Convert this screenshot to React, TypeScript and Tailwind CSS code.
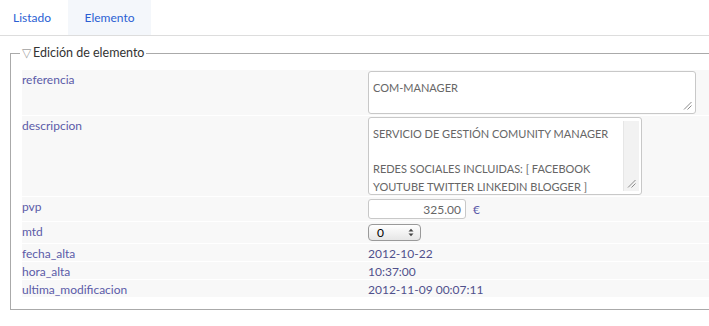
const descripcion = [
  'SERVICIO DE GESTIÓN COMUNITY MANAGER',
  '\u00a0',
  'REDES SOCIALES INCLUIDAS: [ FACEBOOK',
  'YOUTUBE TWITTER LINKEDIN BLOGGER ]',
]

export default function App() {
  return (
    <div className="w-[709px] h-[326px] overflow-hidden bg-white font-['Lato',sans-serif] text-[12px]">
      {/* Pestañas */}
      <div className="flex h-[36px] border-b border-[#dddddd]">
        <div className="flex items-center w-[68px] pl-[13px] text-[#2b5fd3]">Listado</div>
        <div className="flex items-center justify-center w-[83px] bg-[#f4f7fb] text-[#2b5fd3]">Elemento</div>
      </div>

      <fieldset className="ml-[10px] mt-[10px] w-[740px] border border-[#aaaaaa] px-[11px] pt-[10px] pb-[12px]">
        <legend className="-ml-[2px] px-[2px] leading-[14px] text-[#333333] text-[12.5px]">
          <span className="text-[#a0a0a0] text-[12px] mr-[2px]">▽</span>Edición de elemento
        </legend>

        <div className="flex flex-col gap-px">
          <Row label="referencia" pad="py-[1px]">
            <TextBox className="w-[328px] h-[43px]">
              <div>COM-MANAGER</div>
            </TextBox>
          </Row>

          <Row label="descripcion" pad="py-[1px]">
            <TextBox className="w-[274px] h-[78px]" scroll>
              {descripcion.map((l, i) => (
                <div key={i} className="whitespace-nowrap">{l}</div>
              ))}
            </TextBox>
          </Row>

          <Row label="pvp" pad="py-[2px]">
            <div className="flex items-center gap-[7px]">
              <div className="w-[98px] h-[20px] border border-[#c8c8c8] rounded-[3px] bg-white flex items-center justify-end pr-[4px] text-[#666666]">
                325.00
              </div>
              <span className="text-[#5b5ba8]">€</span>
            </div>
          </Row>

          <Row label="mtd" pad="py-[2px]">
            <div className="w-[53px] h-[17px] border border-[#9a9a9a] rounded-[4px] bg-gradient-to-b from-white to-[#e6e6e6] flex items-center justify-between pl-[8px] pr-[6px] text-black">
              <span className="leading-none">0</span>
              <svg width="6" height="9" viewBox="0 0 6 9">
                <path d="M0.5 3.5 L3 0.8 L5.5 3.5 Z" fill="#444" />
                <path d="M0.5 5.5 L3 8.2 L5.5 5.5 Z" fill="#444" />
              </svg>
            </div>
          </Row>

          <Row label="fecha_alta" pad="pt-[3px] pb-[1px]">
            <span className="text-[#50508c]">2012-10-22</span>
          </Row>
          <Row label="hora_alta" pad="pt-[3px] pb-[1px]">
            <span className="text-[#50508c]">10:37:00</span>
          </Row>
          <Row label="ultima_modificacion" pad="pt-[3px] pb-[1px]">
            <span className="text-[#50508c]">2012-11-09 00:07:11</span>
          </Row>
        </div>
      </fieldset>
    </div>
  )
}

function Row({ label, pad, children }: { label: string; pad: string; children: React.ReactNode }) {
  return (
    <div className="grid grid-cols-[346px_1fr] bg-[#f8f8f8] leading-[13px]">
      <div className="pt-[3px] pb-[1px] text-[#5b5ba8]">{label}</div>
      <div className={pad}>{children}</div>
    </div>
  )
}

function Grip() {
  return (
    <svg width="9" height="9" viewBox="0 0 9 9" className="absolute right-[3px] bottom-[3px]">
      <path d="M1 8.5 L8.5 1 M4.5 8.5 L8.5 4.5" stroke="#8a8a8a" strokeWidth="1" />
    </svg>
  )
}

function TextBox({
  className,
  scroll = false,
  children,
}: {
  className: string
  scroll?: boolean
  children: React.ReactNode
}) {
  return (
    <div className={`relative border border-[#c8c8c8] rounded-[3px] bg-white overflow-hidden ${className}`}>
      <div className="pl-[4px] pt-[7px] text-[11px] leading-[17.5px] text-[#666666]">{children}</div>
      {scroll ? (
        <div className="absolute right-[2px] top-[3px] bottom-[3px] w-[16px] bg-[#f2f2f2] border-l border-[#e6e6e6]">
          <Grip />
        </div>
      ) : (
        <Grip />
      )}
    </div>
  )
}
